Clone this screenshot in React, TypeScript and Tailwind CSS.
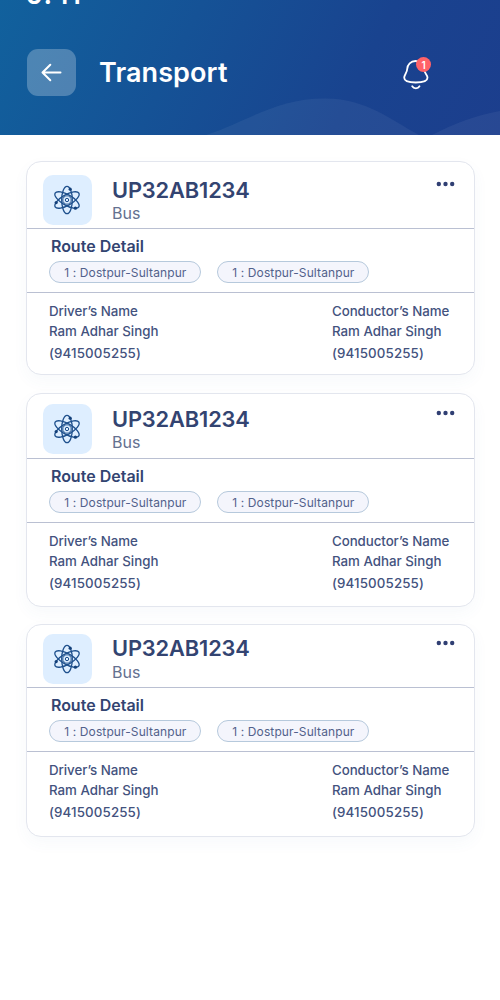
type Vehicle = {
  plate: string;
  cardGap: string;
  head: string;
  title: string;
  foot: string;
};

const vehicles: Vehicle[] = [
  { plate: 'UP32AB1234', cardGap: '', head: 'h-[66px] pt-[13px]', title: 'h-[29px]', foot: 'h-[81px]' },
  { plate: 'UP32AB1234', cardGap: 'mt-[18px]', head: 'h-[64px] pt-[10px]', title: 'h-[29px]', foot: 'h-[83px]' },
  { plate: 'UP32AB1234', cardGap: 'mt-[17px]', head: 'h-[62px] pt-[9px]', title: '-mt-px h-[30px]', foot: 'h-[84px]' },
];

function AtomIcon() {
  return (
    <svg width="28" height="30" viewBox="-14 -15 28 30" fill="none" stroke="#1d4f8c" strokeWidth="1.3">
      <ellipse rx="5.3" ry="13.7" />
      <ellipse rx="5.3" ry="13.7" transform="rotate(60)" />
      <ellipse rx="5.3" ry="13.7" transform="rotate(-60)" />
      <circle r="4.2" strokeWidth="0.9" />
      <circle r="1.7" strokeWidth="1" />
      <g fill="#123f79" stroke="none">
        <circle cx="3.2" cy="-10.8" r="1.6" />
        <circle cx="-10.8" cy="2.6" r="1.6" />
        <circle cx="8.4" cy="8.2" r="1.6" />
      </g>
    </svg>
  );
}

function RoutePill() {
  return (
    <span className="flex h-[22px] w-[152px] items-center justify-center rounded-full border border-[#b6c9dc] bg-[#f4f5fc] pt-px text-[12px] tracking-[0.11px] text-[#52618b]">
      1 : Dostpur-Sultanpur
    </span>
  );
}

function Person({ role }: { role: string }) {
  return (
    <div className="flex w-[120px] flex-col whitespace-nowrap text-[13.3px] font-medium text-[#43527e]">
      <span className="h-5 leading-5 tracking-[-0.06px]">{role}</span>
      <span className="h-[22px] leading-5">Ram Adhar Singh</span>
      <span className="h-5 leading-5 tracking-[0.14px]">(9415005255)</span>
    </div>
  );
}

function VehicleCard({ plate, cardGap, head, title, foot }: Vehicle) {
  return (
    <article className={`flex w-[449px] flex-col rounded-[15px] border border-[#e3e6ee] bg-white shadow-[0_6px_16px_rgba(80,110,170,0.045)] ${cardGap}`}>
      <div className={`flex pl-[15.5px] ${head}`}>
        <div className="flex size-[49.5px] shrink-0 items-center justify-center rounded-[10px] bg-[#deeeff]">
          <AtomIcon />
        </div>
        <div className="ml-5 flex flex-1 flex-col">
          <h2 className={`text-[21.8px] leading-[30px] font-semibold tracking-[-0.12px] text-[#334471] ${title}`}>{plate}</h2>
          <p className="text-[16px] leading-[19px] text-[#64718f]">Bus</p>
        </div>
        <button aria-label="More" className="mt-[5.5px] mr-[19px] h-1.5">
          <svg width="19" height="6" viewBox="0 0 19 6" fill="#303f73">
            <circle cx="2.8" cy="3" r="2.2" />
            <circle cx="9.500" cy="3" r="2.2" />
            <circle cx="16.200" cy="3" r="2.2" />
          </svg>
        </button>
      </div>
      <div className="h-[65px] border-y border-[#bac0d2] pt-[7px] pl-[22.4px]">
        <h3 className="pl-[1.5px] text-[16px] leading-5 font-semibold text-[#334471]">Route Detail</h3>
        <div className="mt-[5px] flex gap-4">
          <RoutePill />
          <RoutePill />
        </div>
      </div>
      <div className={`flex justify-between pt-[8px] pr-[22px] pl-[22px] ${foot}`}>
        <Person role="Driver’s Name" />
        <Person role="Conductor’s Name" />
      </div>
    </article>
  );
}

export default function App() {
  return (
    <div className="h-[1000px] w-[500px] overflow-hidden bg-white font-['Inter',sans-serif]">
      <header className="relative h-[134.5px] overflow-hidden bg-[linear-gradient(116deg,#11619d_0%,#155296_36%,#19438f_70%,#1c3e8d_100%)]">
        <svg className="absolute inset-x-0 bottom-0" width="500" height="60" viewBox="0 75 500 60" fill="#fff" fillOpacity="0.055">
          <path d="M206 135C247 122 276 98 326 98.500C367 99 391 120 419 135Z" />
          <path d="M432 135C455 123 477 115 500 111V135Z" />
        </svg>
        <div className="absolute -top-[20px] left-[26px] text-[27px] leading-[30px] font-semibold tracking-[0.2px] text-white">9:41</div>
        <div className="relative flex h-full items-start pt-[49px] pl-[27px]">
          <button aria-label="Back" className="flex h-[47px] w-[49px] items-center justify-center rounded-[11px] bg-white/25">
            <svg width="22" height="20" viewBox="0 0 22 20" fill="none" stroke="#fff" strokeWidth="2" strokeLinecap="round" strokeLinejoin="round">
              <path d="M19.500 9.500H1.500M9.300 1.800L1.500 9.500L9.300 17.200" />
            </svg>
          </button>
          <h1 className="ml-[23px] h-[47px] w-[303px] text-[27px] leading-[47px] font-semibold tracking-[0.1px] text-white">Transport</h1>
          <div className="relative mt-[7px] h-[36px] w-[32px]">
            <svg width="32" height="36" viewBox="0 0 32 36" fill="none" stroke="#fff" strokeWidth="1.8" strokeLinecap="round">
              <path d="M13.500 5C8.800 5 5.400 8.600 5.200 13C5.100 17 2.200 18.300 2.200 21.800C2.200 25 6 26.500 13.700 26.500C21.400 26.500 25.500 25 25.500 21.800C25.500 18.300 22 17 21.900 13C21.700 8.600 18.300 5 13.500 5Z" />
              <path d="M10.200 30.300C11.700 33 16 33 17.500 30.300" />
            </svg>
            <span className="absolute top-[1px] left-[14px] flex size-[15px] items-center justify-center rounded-full bg-[#ff6268] text-[10px] leading-none font-semibold text-white">1</span>
          </div>
        </div>
      </header>
      <main className="flex flex-col items-start pt-[26.5px] pl-[26px]">
        {vehicles.map((v, i) => (
          <VehicleCard key={i} {...v} />
        ))}
      </main>
    </div>
  );
}
